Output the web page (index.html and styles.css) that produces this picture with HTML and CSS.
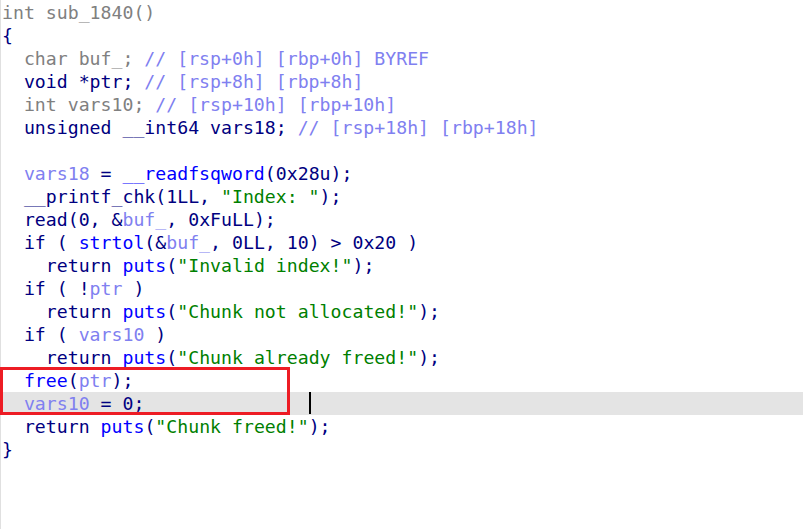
FILE: index.html
```html
<!DOCTYPE html>
<html>
<head>
<meta charset="utf-8">
<link rel="stylesheet" href="styles.css">
</head>
<body>
<div class="code">
<div class="ln"><span class="g">int sub_1840()</span></div>
<div class="ln"><span class="k">{</span></div>
<div class="ln">  <span class="g">char buf_;</span> <span class="c">// [rsp+0h] [rbp+0h] BYREF</span></div>
<div class="ln">  <span class="k">void *ptr;</span> <span class="c">// [rsp+8h] [rbp+8h]</span></div>
<div class="ln">  <span class="g">int vars10;</span> <span class="c">// [rsp+10h] [rbp+10h]</span></div>
<div class="ln">  <span class="k">unsigned __int64 vars18;</span> <span class="c">// [rsp+18h] [rbp+18h]</span></div>
<div class="ln"> </div>
<div class="ln">  <span class="v">vars18</span><span class="k"> = </span><span class="f">__readfsqword</span><span class="k">(0x28u);</span></div>
<div class="ln">  <span class="k">__printf_chk(1LL, </span><span class="s">"Index: "</span><span class="k">);</span></div>
<div class="ln">  <span class="k">read(0, &amp;</span><span class="v">buf_</span><span class="k">, 0xFuLL);</span></div>
<div class="ln">  <span class="k">if ( </span><span class="f">strtol</span><span class="k">(&amp;</span><span class="v">buf_</span><span class="k">, 0LL, 10) &gt; 0x20 )</span></div>
<div class="ln">    <span class="k">return </span><span class="f">puts</span><span class="k">(</span><span class="s">"Invalid index!"</span><span class="k">);</span></div>
<div class="ln">  <span class="k">if ( !</span><span class="v">ptr</span><span class="k"> )</span></div>
<div class="ln">    <span class="k">return </span><span class="f">puts</span><span class="k">(</span><span class="s">"Chunk not allocated!"</span><span class="k">);</span></div>
<div class="ln">  <span class="k">if ( </span><span class="v">vars10</span><span class="k"> )</span></div>
<div class="ln">    <span class="k">return </span><span class="f">puts</span><span class="k">(</span><span class="s">"Chunk already freed!"</span><span class="k">);</span></div>
<div class="ln">  <span class="f">free</span><span class="k">(</span><span class="v">ptr</span><span class="k">);</span></div>
<div class="ln cur">  <span class="v">vars10</span><span class="k"> = 0;</span><span class="caret"></span></div>
<div class="ln">  <span class="k">return </span><span class="f">puts</span><span class="k">(</span><span class="s">"Chunk freed!"</span><span class="k">);</span></div>
<div class="ln"><span class="k">}</span></div>
<div class="mark"></div>
</div>
</body>
</html>
```

FILE: styles.css
```css
html, body {
  margin: 0;
  padding: 0;
  background: #ffffff;
}
.code {
  position: relative;
  height: 529px;
  box-sizing: border-box;
  border-left: 1px solid #e0e0e0;
  padding-top: 1px;
  padding-left: 1px;
  font-family: "DejaVu Sans Mono", "Liberation Mono", monospace;
  font-size: 18.2px;
}
.ln {
  position: relative;
  height: 23px;
  line-height: 23px;
  white-space: pre;
  color: #000080;
}
.cur {
  background: #e4e4e4;
}
.g { color: #808080; }
.k { color: #000080; }
.c { color: #8080f0; }
.v { color: #8080f0; }
.f { color: #0000ff; }
.s { color: #008000; }
.caret {
  position: absolute;
  left: 307px;
  top: 0;
  width: 2px;
  height: 22px;
  background: #000000;
}
.mark {
  position: absolute;
  left: -1px;
  top: 367px;
  width: 290px;
  height: 48px;
  box-sizing: border-box;
  border: 3px solid #ed1c24;
}
```
